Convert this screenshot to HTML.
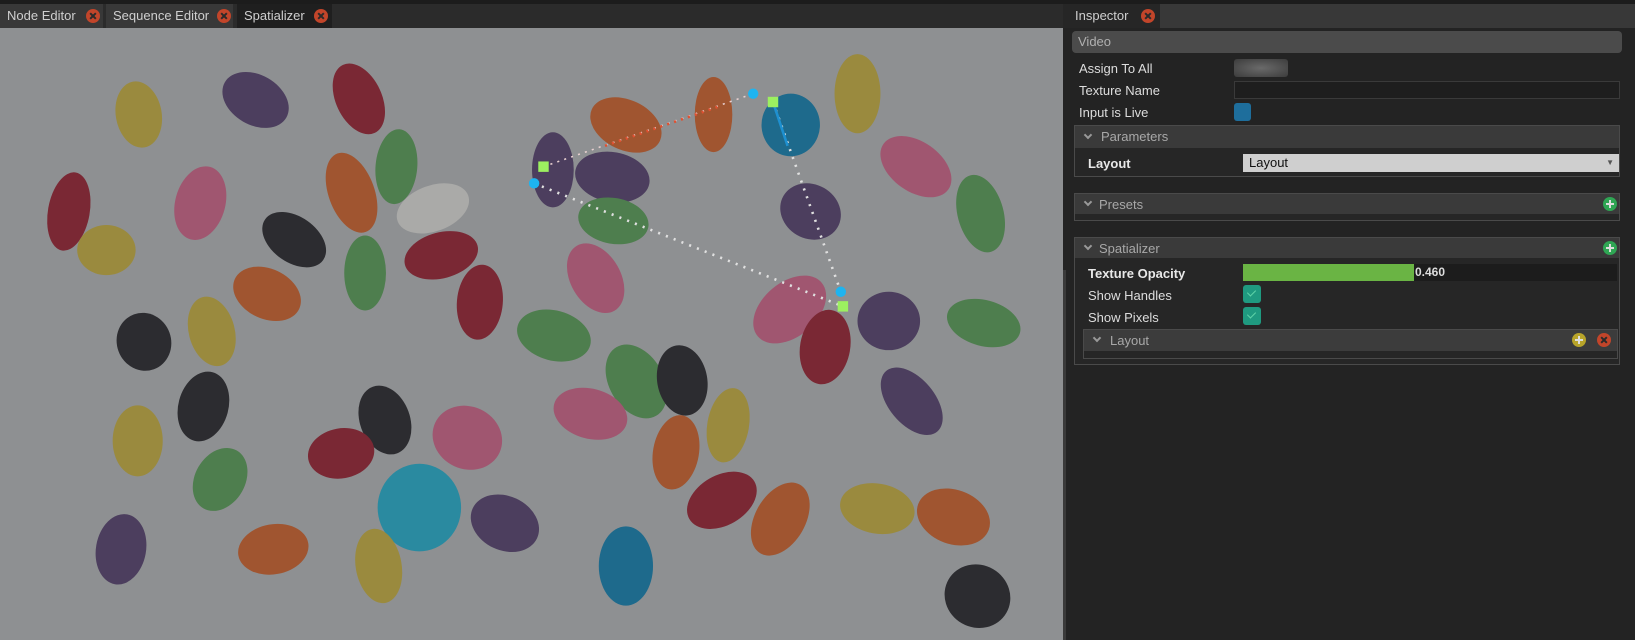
<!DOCTYPE html>
<html><head><meta charset="utf-8"><style>
*{box-sizing:border-box;margin:0;padding:0}
body{width:1635px;height:640px;background:#232323;font-family:"Liberation Sans","DejaVu Sans",sans-serif;font-size:13px;color:#ddd;position:relative;overflow:hidden}
.a{position:absolute}
.tab{position:absolute;top:4px;height:24px;background:#383838;color:#cfcfcf;line-height:24px;padding-left:7px;font-size:13px}
.x{position:absolute;width:14px;height:14px;border-radius:50%;background:#c2452a;top:5px}
.x:before,.x:after{content:"";position:absolute;left:6px;top:3px;width:2px;height:8px;background:#2a2a2a;transform:rotate(45deg)}
.x:after{transform:rotate(-45deg)}
.lbl{position:absolute;font-size:13px;color:#ddd}
.grp{position:absolute;border:1px solid #4a4a4a;background:#262626}
.hdr{position:absolute;left:0;right:0;top:0;background:#3a3a3a;color:#a8a8a8}
.chev{position:absolute;width:6px;height:6px;border-right:2px solid #999;border-bottom:2px solid #999;transform:rotate(45deg)}
.plus{position:absolute;width:14px;height:14px;border-radius:50%;background:#2fa654}
.plus:before{content:"";position:absolute;left:3px;top:6px;width:8px;height:2px;background:#ddd}
.plus:after{content:"";position:absolute;left:6px;top:3px;width:2px;height:8px;background:#ddd}
.cb{position:absolute;width:18px;height:18px;border-radius:3px;background:#1f9a80}
.cb:after{content:"";position:absolute;left:6px;top:3px;width:4px;height:7px;border-right:1.5px solid #5fd3a8;border-bottom:1.5px solid #5fd3a8;transform:rotate(45deg)}
</style></head><body>
<div class="a" style="left:0;top:0;width:1635px;height:4px;background:#1c1c1c"></div>
<div class="a" style="left:0;top:4px;width:1063px;height:24px;background:#2b2b2b"></div>
<div class="tab" style="left:0;width:103px">Node Editor<div class="x" style="left:86px"></div></div>
<div class="tab" style="left:106px;width:127px">Sequence Editor<div class="x" style="left:111px"></div></div>
<div class="tab" style="left:237px;width:95px;background:#1f1f1f">Spatializer<div class="x" style="left:77px"></div></div>

<svg class="a" style="left:0;top:28px" width="1063" height="612" viewBox="0 27 1019 587" preserveAspectRatio="none">
<rect x="0" y="27" width="1019" height="587" fill="#8e9092"/>
<g id="beans">
<ellipse cx="133" cy="110" rx="22" ry="32" transform="rotate(-10 133 110)" fill="#9a8a3e"/>
<ellipse cx="245" cy="96" rx="34" ry="24" transform="rotate(30 245 96)" fill="#4c3e5e"/>
<ellipse cx="344" cy="95" rx="22" ry="36" transform="rotate(-25 344 95)" fill="#7a2834"/>
<ellipse cx="600" cy="120" rx="36" ry="24" transform="rotate(25 600 120)" fill="#a05530"/>
<ellipse cx="684" cy="110" rx="18" ry="36" fill="#a05530"/>
<ellipse cx="758" cy="120" rx="28" ry="30" fill="#1e6a8c"/>
<ellipse cx="822" cy="90" rx="22" ry="38" fill="#9a8a3e"/>
<ellipse cx="878" cy="160" rx="38" ry="24" transform="rotate(35 878 160)" fill="#a05670"/>
<ellipse cx="530" cy="163" rx="20" ry="36" fill="#4c3e5e"/>
<ellipse cx="587" cy="170" rx="36" ry="24" transform="rotate(10 587 170)" fill="#4c3e5e"/>
<ellipse cx="380" cy="160" rx="20" ry="36" transform="rotate(5 380 160)" fill="#4e7e4e"/>
<ellipse cx="337" cy="185" rx="22" ry="40" transform="rotate(-20 337 185)" fill="#a05530"/>
<ellipse cx="415" cy="200" rx="36" ry="22" transform="rotate(-20 415 200)" fill="#aaaaa8"/>
<ellipse cx="66" cy="203" rx="20" ry="38" transform="rotate(10 66 203)" fill="#7a2834"/>
<ellipse cx="192" cy="195" rx="24" ry="36" transform="rotate(15 192 195)" fill="#a05670"/>
<ellipse cx="940" cy="205" rx="22" ry="38" transform="rotate(-15 940 205)" fill="#4e7e4e"/>
<ellipse cx="777" cy="203" rx="30" ry="26" transform="rotate(30 777 203)" fill="#4c3e5e"/>
<ellipse cx="588" cy="212" rx="34" ry="22" transform="rotate(10 588 212)" fill="#4e7e4e"/>
<ellipse cx="282" cy="230" rx="34" ry="22" transform="rotate(35 282 230)" fill="#2c2c30"/>
<ellipse cx="102" cy="240" rx="28" ry="24" fill="#9a8a3e"/>
<ellipse cx="423" cy="245" rx="36" ry="22" transform="rotate(-15 423 245)" fill="#7a2834"/>
<ellipse cx="350" cy="262" rx="20" ry="36" fill="#4e7e4e"/>
<ellipse cx="460" cy="290" rx="22" ry="36" transform="rotate(5 460 290)" fill="#7a2834"/>
<ellipse cx="571" cy="267" rx="24" ry="36" transform="rotate(-30 571 267)" fill="#a05670"/>
<ellipse cx="256" cy="282" rx="34" ry="24" transform="rotate(25 256 282)" fill="#a05530"/>
<ellipse cx="757" cy="297" rx="26" ry="40" transform="rotate(50 757 297)" fill="#a05670"/>
<ellipse cx="791" cy="333" rx="24" ry="36" transform="rotate(10 791 333)" fill="#7a2834"/>
<ellipse cx="852" cy="308" rx="30" ry="28" fill="#4c3e5e"/>
<ellipse cx="943" cy="310" rx="36" ry="22" transform="rotate(15 943 310)" fill="#4e7e4e"/>
<ellipse cx="138" cy="328" rx="26" ry="28" transform="rotate(-20 138 328)" fill="#2c2c30"/>
<ellipse cx="203" cy="318" rx="22" ry="34" transform="rotate(-15 203 318)" fill="#9a8a3e"/>
<ellipse cx="531" cy="322" rx="36" ry="24" transform="rotate(15 531 322)" fill="#4e7e4e"/>
<ellipse cx="195" cy="390" rx="24" ry="34" transform="rotate(15 195 390)" fill="#2c2c30"/>
<ellipse cx="610" cy="366" rx="26" ry="38" transform="rotate(-30 610 366)" fill="#4e7e4e"/>
<ellipse cx="654" cy="365" rx="24" ry="34" transform="rotate(-10 654 365)" fill="#2c2c30"/>
<ellipse cx="874" cy="385" rx="22" ry="38" transform="rotate(-40 874 385)" fill="#4c3e5e"/>
<ellipse cx="566" cy="397" rx="36" ry="24" transform="rotate(15 566 397)" fill="#a05670"/>
<ellipse cx="369" cy="403" rx="24" ry="34" transform="rotate(-20 369 403)" fill="#2c2c30"/>
<ellipse cx="132" cy="423" rx="24" ry="34" fill="#9a8a3e"/>
<ellipse cx="448" cy="420" rx="34" ry="30" transform="rotate(25 448 420)" fill="#a05670"/>
<ellipse cx="698" cy="408" rx="20" ry="36" transform="rotate(10 698 408)" fill="#9a8a3e"/>
<ellipse cx="648" cy="434" rx="22" ry="36" transform="rotate(10 648 434)" fill="#a05530"/>
<ellipse cx="327" cy="435" rx="32" ry="24" transform="rotate(-10 327 435)" fill="#7a2834"/>
<ellipse cx="211" cy="460" rx="24" ry="32" transform="rotate(30 211 460)" fill="#4e7e4e"/>
<ellipse cx="402" cy="487" rx="40" ry="42" fill="#2a8aa0"/>
<ellipse cx="484" cy="502" rx="34" ry="26" transform="rotate(25 484 502)" fill="#4c3e5e"/>
<ellipse cx="692" cy="480" rx="36" ry="24" transform="rotate(-30 692 480)" fill="#7a2834"/>
<ellipse cx="748" cy="498" rx="24" ry="38" transform="rotate(30 748 498)" fill="#a05530"/>
<ellipse cx="841" cy="488" rx="36" ry="24" transform="rotate(10 841 488)" fill="#9a8a3e"/>
<ellipse cx="914" cy="496" rx="36" ry="26" transform="rotate(20 914 496)" fill="#a05530"/>
<ellipse cx="116" cy="527" rx="24" ry="34" transform="rotate(10 116 527)" fill="#4c3e5e"/>
<ellipse cx="262" cy="527" rx="34" ry="24" transform="rotate(-10 262 527)" fill="#a05530"/>
<ellipse cx="363" cy="543" rx="22" ry="36" transform="rotate(-10 363 543)" fill="#9a8a3e"/>
<ellipse cx="600" cy="543" rx="26" ry="38" fill="#1e6a8c"/>
<ellipse cx="937" cy="572" rx="32" ry="30" transform="rotate(30 937 572)" fill="#2c2c30"/>
</g>
<g stroke-width="1.5">
<line x1="521" y1="160" x2="722" y2="90" stroke="#e8d0d0" stroke-dasharray="2 5"/>
<line x1="580" y1="140" x2="690" y2="102" stroke="#e05030" stroke-width="2.5" stroke-dasharray="2 5"/>
<line x1="512" y1="176" x2="808" y2="294" stroke="#e0e0e0" stroke-width="2.5" stroke-dasharray="2 6"/>
<line x1="741" y1="98" x2="806" y2="280" stroke="#e0e0e0" stroke-width="2.5" stroke-dasharray="2 6"/>
<line x1="741" y1="98" x2="755" y2="140" stroke="#1e90d0" stroke-width="2.5"/>
</g>
<circle cx="722" cy="90" r="5" fill="#1eb4f0"/>
<circle cx="512" cy="176" r="5" fill="#1eb4f0"/>
<circle cx="806" cy="280" r="5" fill="#1eb4f0"/>
<rect x="516" y="155" width="10" height="10" fill="#9cf060"/>
<rect x="736" y="93" width="10" height="10" fill="#9cf060"/>
<rect x="803" y="289" width="10" height="10" fill="#9cf060"/>
</svg>

<div class="a" style="left:1063px;top:4px;width:572px;height:24px;background:#383838"></div>
<div class="tab" style="left:1063px;width:97px;height:24px;line-height:24px;background:#262626;padding-left:12px">Inspector<div class="x" style="left:78px;top:5px"></div></div>
<div class="a" style="left:1063px;top:28px;width:572px;height:612px;background:#232323"></div>
<div class="a" style="left:1063px;top:270px;width:3px;height:370px;background:#3a3a3a"></div>
<div class="a" style="left:1072px;top:31px;width:550px;height:22px;background:#4b4b4b;border-radius:4px;color:#b0b0b0;line-height:22px;padding-left:6px">Video</div>
<div class="lbl" style="left:1079px;top:61px">Assign To All</div>
<div class="a" style="left:1234px;top:59px;width:54px;height:18px;border-radius:3px;background:radial-gradient(ellipse at center,#6a6a6a,#3c3c3c)"></div>
<div class="lbl" style="left:1079px;top:83px">Texture Name</div>
<div class="a" style="left:1234px;top:81px;width:386px;height:18px;border:1px solid #3a3a3a;background:#1e1e1e"></div>
<div class="lbl" style="left:1079px;top:105px">Input is Live</div>
<div class="a" style="left:1234px;top:103px;width:17px;height:18px;border-radius:3px;background:#1e6e9c"></div>

<div class="grp" style="left:1074px;top:125px;width:546px;height:52px">
 <div class="hdr" style="height:22px"><div class="chev" style="left:10px;top:6px"></div><span class="a" style="left:26px;top:3px">Parameters</span></div>
 <span class="a" style="left:13px;top:30px;font-weight:bold;color:#e8e8e8">Layout</span>
 <div class="a" style="left:168px;top:28px;width:376px;height:18px;background:#cfcfcf;color:#111;padding-left:6px;line-height:18px">Layout<span class="a" style="right:5px;top:0;font-size:8px;color:#555">▼</span></div>
</div>

<div class="grp" style="left:1074px;top:193px;width:546px;height:28px">
 <div class="hdr" style="height:20px"><div class="chev" style="left:10px;top:5px"></div><span class="a" style="left:24px;top:3px">Presets</span><div class="plus" style="right:2px;top:3px"></div></div>
</div>

<div class="grp" style="left:1074px;top:237px;width:546px;height:128px">
 <div class="hdr" style="height:20px"><div class="chev" style="left:10px;top:5px"></div><span class="a" style="left:24px;top:3px">Spatializer</span><div class="plus" style="right:2px;top:3px"></div></div>
 <span class="a" style="left:13px;top:28px;font-weight:bold;color:#e8e8e8">Texture Opacity</span>
 <div class="a" style="left:168px;top:26px;width:374px;height:17px;background:#1c1c1c"><div class="a" style="left:0;top:0;width:171px;height:17px;background:#6ab444"></div><span class="a" style="left:172px;top:1px;font-weight:bold;font-size:12px;color:#ddd">0.460</span></div>
 <span class="a" style="left:13px;top:50px">Show Handles</span>
 <div class="cb" style="left:168px;top:47px"></div>
 <span class="a" style="left:13px;top:72px">Show Pixels</span>
 <div class="cb" style="left:168px;top:69px"></div>
 <div class="a" style="left:8px;top:91px;width:535px;height:30px;border:1px solid #4a4a4a;background:#262626">
  <div class="hdr" style="height:21px;background:#3c3c3c"><div class="chev" style="left:10px;top:5px"></div><span class="a" style="left:26px;top:3px">Layout</span>
   <div class="plus" style="right:31px;top:3px;background:#b8a42a"></div>
   <div class="x" style="right:6px;top:3px;left:auto"></div></div>
 </div>
</div>
</body></html>
